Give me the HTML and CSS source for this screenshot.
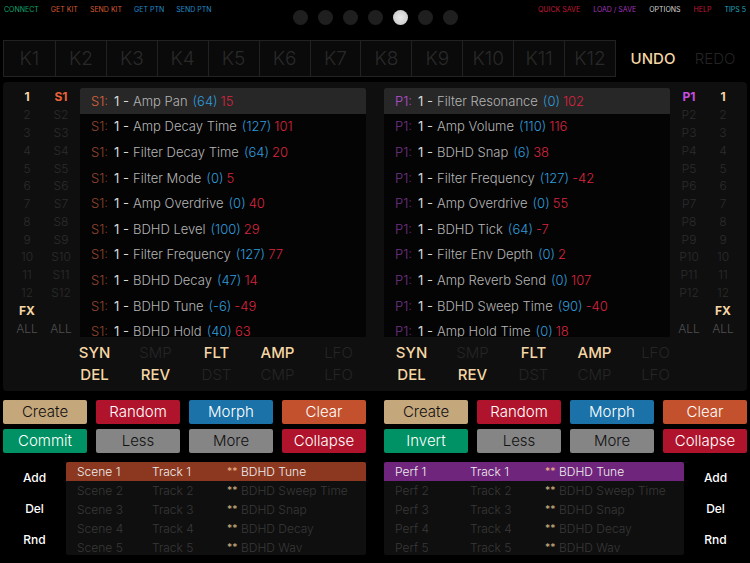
FILE: index.html
```html
<!DOCTYPE html>
<html lang="en">

<head>
    <meta charset="utf-8">
    <meta name="viewport" content="width=device-width, initial-scale=1.0">
    <title>Scene and performance editor</title>
    <link rel="stylesheet" href="styles.css">
</head>

<body>
    <header>
        <nav class="menu">
            <button class="green">CONNECT</button>
            <button class="orange">GET KIT</button>
            <button class="orange">SEND KIT</button>
            <button class="blue">GET PTN</button>
            <button class="blue">SEND PTN</button>
        </nav>
        <div class="steps">
            <span></span><span></span><span></span><span></span><span class="on"></span><span></span><span></span>
        </div>
        <nav class="menu menu-right">
            <button class="red">QUICK SAVE</button>
            <button class="purple">LOAD / SAVE</button>
            <button class="white">OPTIONS</button>
            <button class="red">HELP</button>
            <button class="teal">TIPS 5</button>
        </nav>
    </header>

    <section class="kit-bar">
        <div class="kits"></div>
        <div class="history">
            <button class="undo">UNDO</button>
            <button class="redo" disabled>REDO</button>
        </div>
    </section>

    <main>
        <div class="editor">
            <div class="side side-left">
                <div class="picker tracks"></div>
                <div class="picker scenes" data-prefix="S"></div>
            </div>
            <div class="params"><ul class="scene-params"></ul></div>
            <div class="params"><ul class="perf-params"></ul></div>
            <div class="side side-right">
                <div class="picker perfs" data-prefix="P"></div>
                <div class="picker tracks"></div>
            </div>
        </div>
        <div class="filters">
            <div class="filter-group"></div>
            <div class="filter-group"></div>
        </div>
    </main>

    <section class="halves">
        <div class="actions">
            <button class="create">Create</button>
            <button class="random">Random</button>
            <button class="morph">Morph</button>
            <button class="clear">Clear</button>
            <button class="commit">Commit</button>
            <button class="amount">Less</button>
            <button class="amount">More</button>
            <button class="random">Collapse</button>
        </div>
        <div class="actions">
            <button class="create">Create</button>
            <button class="random">Random</button>
            <button class="morph">Morph</button>
            <button class="clear">Clear</button>
            <button class="commit">Invert</button>
            <button class="amount">Less</button>
            <button class="amount">More</button>
            <button class="random">Collapse</button>
        </div>
    </section>

    <section class="halves">
        <div class="slots">
            <div class="edit">
                <button>Add</button>
                <button>Del</button>
                <button>Rnd</button>
            </div>
            <div class="slot-list"><table class="scene-slots" data-name="Scene"></table></div>
        </div>
        <div class="slots">
            <div class="slot-list"><table class="perf-slots" data-name="Perf"></table></div>
            <div class="edit">
                <button>Add</button>
                <button>Del</button>
                <button>Rnd</button>
            </div>
        </div>
    </section>

    <script src="script.js"></script>
</body>

</html>
```

FILE: styles.css
```css
* {
    box-sizing: border-box;
    margin: 0;
    padding: 0;
}

body {
    background-color: #000;
    color: #b4b4b4;
    font-family: Inter, "Liberation Sans", sans-serif;
    font-weight: 300;
    padding: 0 3px;
}

button {
    background: none;
    border: none;
    color: inherit;
    font: inherit;
    white-space: nowrap;
}

ul {
    list-style: none;
}

/* Top menu */
header {
    display: grid;
    grid-template-columns: 1fr auto 1fr;
    height: 40px;
}

.menu {
    display: flex;
    align-items: flex-start;
    gap: 12px;
    padding: 4px 1px;
    font-size: 7px;
    font-weight: 400;
    line-height: 11px;
}

.menu-right {
    justify-content: flex-end;
    gap: 13px;
}

.green { color: #0fa56c; }
.orange { color: #d65a32; }
.blue { color: #218ccb; }
.red { color: #c01838; }
.purple { color: #a037ba; }
.white { color: #d4d4d4; }
.teal { color: #23a5bc; }

.steps {
    display: flex;
    gap: 10px;
    padding-top: 10px;
}

.steps span {
    width: 15px;
    height: 15px;
    border-radius: 50%;
    background-color: #1f1f1f;
}

.steps .on {
    background: radial-gradient(#e8e8e8, #c4c4c4);
}

/* Kits */
.kit-bar {
    display: grid;
    grid-template-columns: 1fr 131px;
    height: 37px;
    margin-bottom: 5px;
}

.kits {
    display: grid;
    grid-template-columns: repeat(12, 1fr);
    border: 1px solid #222;
    background-color: #0a0a0a;
    color: #292929;
    font-size: 19px;
}

.kits button + button {
    border-left: 1px solid #222;
}

.history {
    display: grid;
    grid-template-columns: 1fr 1fr;
    padding: 0 1px 0 6px;
    font-size: 15px;
}

.undo {
    color: #f5d6a4;
    font-weight: 500;
}

.redo {
    color: #242424;
}

/* Editor */
main {
    background-color: #0f0f0f;
    border-radius: 4px;
    padding: 6px 0 5px;
}

.editor {
    display: grid;
    grid-template-columns: 77px 1fr 1fr 77px;
    height: 249px;
}

.side {
    display: grid;
    grid-template-columns: 1fr 1fr;
    height: 249px;
}

.side-left {
    padding: 0 2px 0 7px;
}

.side-right {
    padding: 0 7px 0 2px;
}

.picker {
    display: flex;
    flex-direction: column;
    color: #2c2c2c;
    font-size: 12px;
    line-height: 17px;
}

.picker button {
    flex: 1;
}

.picker .all {
    color: #505050;
}

.picker .picked {
    color: #f5d6a4;
    font-weight: 700;
}

.scenes .picked {
    color: #e8623a;
}

.perfs .picked {
    color: #c64fe0;
}

.params {
    background-color: #040404;
    border-radius: 2px 2px 0 0;
    height: 249px;
    overflow: hidden;
    margin-right: 9px;
}

.params + .params {
    margin: 0 0 0 9px;
}

.params ul {
    display: flex;
    flex-direction: column;
    height: 256px;
    font-size: 13px;
}

.params li {
    flex: 1;
    display: flex;
    align-items: center;
    padding-left: 11px;
    white-space: nowrap;
}

.params li:first-child {
    background-color: #272727;
}

.slot {
    width: 23px;
    color: #94452d;
}

.perf-params .slot {
    color: #753287;
}

li:first-child .slot {
    color: #d8643c;
}

.perf-params li:first-child .slot {
    color: #bd50d6;
}

.track {
    width: 19px;
    color: #d8d8d8;
    font-weight: 400;
}

.from {
    color: #309cdc;
    margin: 0 3px 0 5px;
}

.to {
    color: #d8243f;
}

.filters {
    display: flex;
    gap: 12px;
    padding: 5px 61px 0;
}

.filter-group {
    flex: 1;
    display: grid;
    grid-template-columns: repeat(5, 1fr);
    color: #252525;
    font-size: 15px;
    line-height: 22px;
}

.filter-group .picked {
    color: #f5d6a4;
    font-weight: 500;
}

/* Buttons and slot tables */
.halves {
    display: grid;
    grid-template-columns: 1fr 1fr;
    gap: 18px;
    margin-top: 9px;
}

.actions {
    display: grid;
    grid-template-columns: repeat(4, 1fr);
    gap: 5px 9px;
    color: #fff;
    font-size: 15px;
    line-height: 24px;
}

.actions button {
    border-radius: 2px;
}

.actions .create {
    background-color: #c5a77c;
    color: #111;
}

.actions .random { background-color: #b0142c; }
.actions .morph { background-color: #1a72a8; }
.actions .clear { background-color: #c4512d; }
.actions .commit { background-color: #009264; }

.actions .amount {
    background-color: #858585;
    color: #111;
}

.slots {
    display: flex;
    height: 93px;
}

.edit {
    width: 63px;
    display: grid;
    color: #fff;
    font-size: 12px;
    font-weight: 500;
}

.slot-list {
    flex: 1;
    overflow: hidden;
    border-radius: 2px;
    background-color: #0f0f0f;
}

.slot-list table {
    width: 100%;
    table-layout: fixed;
    border-collapse: collapse;
    color: #383838;
    font-size: 12px;
    line-height: 19px;
    white-space: nowrap;
}

.slot-list td:first-child {
    width: 86px;
    padding-left: 11px;
}

.slot-list td:nth-child(2) {
    width: 75px;
}

.slot-list td:nth-child(3) {
    width: 14px;
    color: #c4aa7e;
    font-size: 10px;
    font-weight: 500;
}

.slot-list tr:first-child {
    background-color: #8c3820;
    color: #eee;
}

.perf-slots tr:first-child {
    background-color: #70257c;
}

.slot-list tr:first-child td:nth-child(3) {
    color: #e6ae84;
}
```

FILE: script.js
```js
const sceneParams = [
    ["Amp Pan", 64, 15],
    ["Amp Decay Time", 127, 101],
    ["Filter Decay Time", 64, 20],
    ["Filter Mode", 0, 5],
    ["Amp Overdrive", 0, 40],
    ["BDHD Level", 100, 29],
    ["Filter Frequency", 127, 77],
    ["BDHD Decay", 47, 14],
    ["BDHD Tune", -6, -49],
    ["BDHD Hold", 40, 63]
];

const perfParams = [
    ["Filter Resonance", 0, 102],
    ["Amp Volume", 110, 116],
    ["BDHD Snap", 6, 38],
    ["Filter Frequency", 127, -42],
    ["Amp Overdrive", 0, 55],
    ["BDHD Tick", 64, -7],
    ["Filter Env Depth", 0, 2],
    ["Amp Reverb Send", 0, 107],
    ["BDHD Sweep Time", 90, -40],
    ["Amp Hold Time", 0, 18]
];

const filters = ["SYN", "SMP", "FLT", "AMP", "LFO", "DEL", "REV", "DST", "CMP", "LFO"];
const activeFilters = ["SYN", "FLT", "AMP", "DEL", "REV"];
const machines = ["BDHD Tune", "BDHD Sweep Time", "BDHD Snap", "BDHD Decay", "BDHD Wav"];

function addButton(parent, text, className) {
    const button = document.createElement("button");
    button.textContent = text;
    button.className = className;
    parent.appendChild(button);
}

function showParams(selector, slot, params) {
    const list = document.querySelector(selector);
    params.forEach(([name, from, to]) => {
        list.innerHTML += `<li><span class="slot">${slot}:</span><span class="track">1 -</span><span>${name}</span><span class="from">(${from})</span><span class="to">${to}</span></li>`;
    });
}

// Kits
for (let i = 1; i <= 12; i++) {
    addButton(document.querySelector(".kits"), "K" + i, "");
}

// Track, scene and perf pickers
document.querySelectorAll(".picker").forEach(picker => {
    const prefix = picker.dataset.prefix || "";
    for (let i = 1; i <= 12; i++) {
        addButton(picker, prefix + i, i == 1 ? "picked" : "");
    }
    // only the tracks have an FX row
    addButton(picker, prefix ? "" : "FX", "picked");
    addButton(picker, "ALL", "all");
});

showParams(".scene-params", "S1", sceneParams);
showParams(".perf-params", "P1", perfParams);

document.querySelectorAll(".filter-group").forEach(group => {
    filters.forEach(name => addButton(group, name, activeFilters.includes(name) ? "picked" : ""));
});

document.querySelectorAll(".slot-list table").forEach(table => {
    machines.forEach((machine, i) => {
        const row = table.insertRow();
        [`${table.dataset.name} ${i + 1}`, `Track ${i + 1}`, "**", machine].forEach(text => {
            row.insertCell().textContent = text;
        });
    });
});
```
